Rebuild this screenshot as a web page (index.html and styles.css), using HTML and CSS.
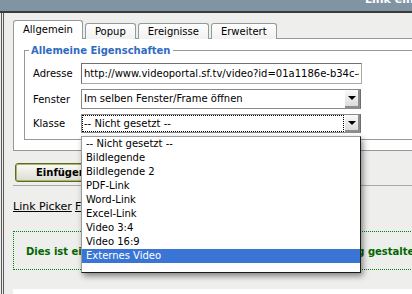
FILE: index.html
```html
<!DOCTYPE html>
<html lang="de">
<head>
  <meta charset="UTF-8">
  <title>Link einfügen</title>
  <link rel="stylesheet" href="styles.css">
</head>
<body>
  <!-- Window title -->
  <div class="titlebar"><span>Link einfügen</span></div>

  <div class="window">
    <!-- Tabs -->
    <div class="tabs">
      <div class="tab active">Allgemein</div>
      <div class="tab">Popup</div>
      <div class="tab">Ereignisse</div>
      <div class="tab">Erweitert</div>
    </div>

    <div class="panel">
      <fieldset>
        <legend>Allemeine Eigenschaften</legend>

        <div class="row">
          <label for="href">Adresse</label>
          <input type="text" id="href" value="http://www.videoportal.sf.tv/video?id=01a1186e-b34c-4b2f">
        </div>

        <div class="row">
          <label>Fenster</label>
          <div class="select">
            <span class="select-value">Im selben Fenster/Frame öffnen</span>
            <span class="select-arrow"></span>
          </div>
        </div>

        <div class="row">
          <label>Klasse</label>
          <div class="select focused">
            <span class="select-value">-- Nicht gesetzt --</span>
            <span class="select-arrow"></span>
          </div>
        </div>
      </fieldset>
    </div>

    <div class="actions">
      <button type="button" class="insert-button"><span>Einfügen</span></button>
    </div>

    <div class="links">
      <a href="#">Link Picker</a> <a href="#">Feedback</a>
    </div>

    <div class="notice">Dies ist ein Beispiel, wie der Link im Artikel damit zukünftig gestaltet wird</div>

    <div class="preview"></div>
  </div>

  <!-- Open dropdown of "Klasse" -->
  <ul class="dropdown">
    <li>-- Nicht gesetzt --</li>
    <li>Bildlegende</li>
    <li>Bildlegende 2</li>
    <li>PDF-Link</li>
    <li>Word-Link</li>
    <li>Excel-Link</li>
    <li>Video 3:4</li>
    <li>Video 16:9</li>
    <li class="selected">Externes Video</li>
  </ul>
</body>
</html>
```

FILE: styles.css
```css
/* General Styles */
body {
  margin: 0;
  width: 412px;
  height: 294px;
  overflow: hidden;
  position: relative;
  font-family: "DejaVu Sans", Verdana, sans-serif;
  font-size: 10px;
  color: #000;
  background-color: #eeeeec;
}

/* Title bar, only the lower part is visible */
.titlebar {
  height: 11px;
  overflow: hidden;
  background-color: #8194a4;
  border-bottom: 2px solid #3b3b3b;
  padding-left: 365px;
  white-space: nowrap;
}

.titlebar span {
  display: block;
  margin-top: -6px;
  line-height: 12px;
  font-size: 11px;
  font-weight: bold;
  color: #fff;
}

.window {
  margin-left: 1px;
  border-left: 3px double #5a5a5a;
  padding: 8px 0 0 9px;
  height: 300px;
}

/* Tabs */
.tabs {
  display: flex;
  align-items: flex-end;
  gap: 2px;
  height: 18px;
}

.tab {
  height: 15px;
  line-height: 15px;
  padding: 0 9px;
  border: 1px solid #919b9c;
  border-bottom: none;
  border-radius: 3px 3px 0 0;
  background: linear-gradient(#fefefe, #f1f1f1);
}

.tab.active {
  height: 18px;
  line-height: 18px;
  background: #fff;
  position: relative;
  z-index: 1;
}

.panel {
  width: 460px;
  margin-top: -1px;
  background-color: #fff;
  border: 1px solid #919b9c;
  border-right: none;
  padding: 5px 0 10px 10px;
}

fieldset {
  margin: 0;
  border: 1px solid #919b9c;
  border-right: none;
  padding: 6px 0 6px 8px;
}

legend {
  padding: 0 2px;
  margin-left: -4px;
  font-size: 10px;
  line-height: 13px;
  font-weight: bold;
  color: #2f6bbf;
}

.row {
  display: flex;
  align-items: center;
  margin-bottom: 5px;
}

.row:last-child {
  margin-bottom: 0;
  margin-top: 1px;
}

label {
  width: 48px;
}

input {
  width: 281px;
  height: 21px;
  box-sizing: border-box;
  margin: 0;
  padding: 0 2px;
  border: 1px solid #7b7b7b;
  border-color: #6f6f6f #a9a9a9 #a9a9a9 #6f6f6f;
  font-family: inherit;
  font-size: 10px;
  color: #000;
  outline: none;
}

/* Select boxes */
.select {
  position: relative;
  width: 280px;
  height: 20px;
  box-sizing: border-box;
  border: 1px solid #8a8a8a;
  border-right-color: #6d6d6d;
  background-color: #fff;
  line-height: 18px;
}

.select.focused {
  height: 19px;
  line-height: 17px;
}

.select-value {
  display: block;
  margin: 0 16px 0 0;
  padding-left: 2px;
  white-space: nowrap;
  overflow: hidden;
}

.select.focused .select-value {
  outline: 1px dotted #000;
  outline-offset: -1px;
}

.select-arrow {
  position: absolute;
  top: 0;
  right: 0;
  bottom: 0;
  width: 15px;
  background: linear-gradient(#fafafa, #dcdcdc);
  border-right: 2px solid #8d8d8d;
  border-bottom: 2px solid #8d8d8d;
  box-sizing: border-box;
}

.select-arrow::after {
  content: "";
  position: absolute;
  left: 3px;
  top: 6px;
  border-left: 4px solid transparent;
  border-right: 4px solid transparent;
  border-top: 4px solid #000;
}

/* Button row */
.actions {
  padding: 12px 0 3px 2px;
  border-bottom: 1px solid #a9a9a9;
  width: 460px;
}

.insert-button {
  display: block;
  width: 100px;
  height: 19px;
  padding: 0;
  text-align: left;
  border: 1px solid #5e6c22;
  border-radius: 3px;
  box-shadow: inset 0 0 0 1px #aab46e;
  background: linear-gradient(#fbfbf6, #dcdcd2);
  font-family: inherit;
  font-size: 10px;
  font-weight: bold;
  color: #000;
}

.insert-button span {
  display: block;
  margin-left: 20px;
}

.links {
  padding-top: 14px;
  height: 18px;
}

.links a {
  color: #000;
  font-size: 11px;
}

/* Green notice */
.notice {
  margin-top: 13px;
  width: 460px;
  height: 37px;
  line-height: 39px;
  padding-left: 12px;
  border: 1px dotted #008000;
  white-space: nowrap;
  font-size: 10px;
  font-weight: bold;
  color: #006600;
}

.preview {
  margin-top: 19px;
  height: 20px;
  background-color: #fff;
}

/* Open list of the Klasse select */
.dropdown {
  position: absolute;
  left: 81px;
  top: 136px;
  width: 280px;
  height: 137px;
  box-sizing: border-box;
  margin: 0;
  padding: 0;
  list-style: none;
  background-color: #fff;
  border: 1px solid #1a1a1a;
  border-left-color: #9a9a9a;
  border-top-color: #9a9a9a;
  box-shadow: 2px 3px 6px rgba(0, 0, 0, 0.45);
}

.dropdown li {
  height: 14px;
  line-height: 14px;
  padding-left: 4px;
  white-space: nowrap;
}

.dropdown li.selected {
  background-color: #3a75d6;
  color: #fff;
}
```
